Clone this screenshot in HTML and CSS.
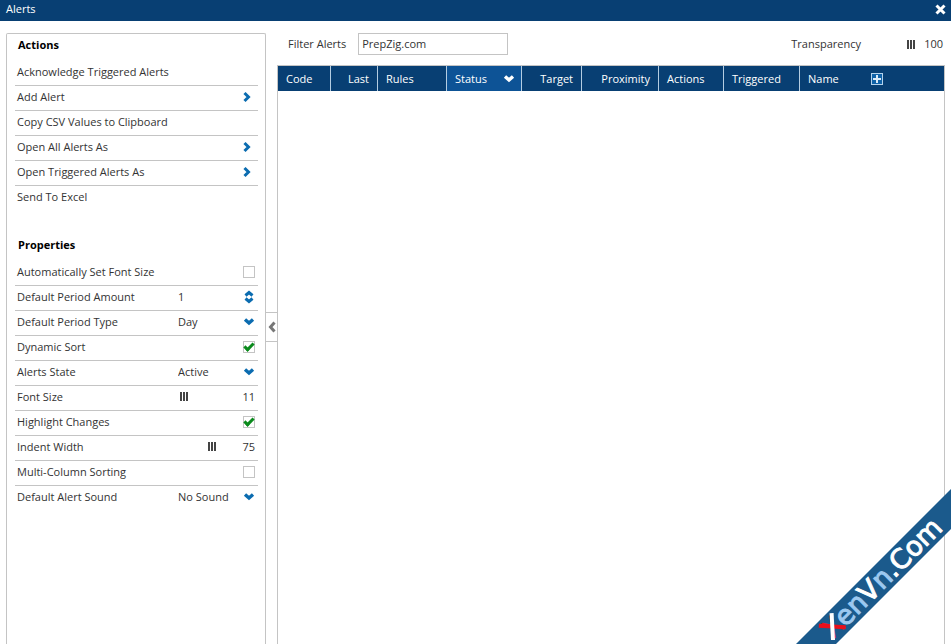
FILE: index.html
```
<!DOCTYPE html>
<html lang="en">
<head>
  <meta charset="UTF-8">
  <meta name="viewport" content="width=device-width, initial-scale=1">
  <title>Alerts</title>
  <link rel="stylesheet" href="styles.css">
</head>
<body>

  <!-- shared icons -->
  <svg class="sprite" aria-hidden="true">
    <symbol id="right" viewBox="0 0 12 12"><path d="M3.5 2L7.5 6L3.5 10" fill="none" stroke="currentColor" stroke-width="3"/></symbol>
    <symbol id="down" viewBox="0 0 12 12"><path d="M2 3.5L6 7L10 3.5" fill="none" stroke="currentColor" stroke-width="3.4"/></symbol>
    <symbol id="updown" viewBox="0 0 12 14"><path d="M2.5 5.5L6 2.5L9.5 5.5M2.5 8.5L6 11.5L9.5 8.5" fill="none" stroke="currentColor" stroke-width="3"/></symbol>
  </svg>

  <header class="titlebar">
    <h1>Alerts</h1>
    <button class="close" aria-label="Close">
      <svg width="11" height="11" viewBox="0 0 11 11"><path d="M1.5 1.5L9.5 9.5M9.5 1.5L1.5 9.5" stroke="#fff" stroke-width="3"/></svg>
    </button>
  </header>

  <div class="layout">
    <aside class="panel">
      <h2>Actions</h2>
      <ul class="rows">
        <li><button class="action">Acknowledge Triggered Alerts</button></li>
        <li><button class="action">Add Alert <svg class="icon"><use href="#right"/></svg></button></li>
        <li><button class="action">Copy CSV Values to Clipboard</button></li>
        <li><button class="action">Open All Alerts As <svg class="icon"><use href="#right"/></svg></button></li>
        <li><button class="action">Open Triggered Alerts As <svg class="icon"><use href="#right"/></svg></button></li>
        <li><button class="action">Send To Excel</button></li>
      </ul>

      <h2>Properties</h2>
      <ul class="rows">
        <li>
          <label for="autoFont">Automatically Set Font Size</label>
          <input type="checkbox" id="autoFont">
        </li>
        <li>
          <label for="periodAmount">Default Period Amount</label>
          <span class="field">
            <input type="text" id="periodAmount" value="1">
            <svg class="icon tall"><use href="#updown"/></svg>
          </span>
        </li>
        <li>
          <label for="periodType">Default Period Type</label>
          <span class="field">
            <select id="periodType"><option>Day</option></select>
            <svg class="icon"><use href="#down"/></svg>
          </span>
        </li>
        <li>
          <label for="dynamicSort">Dynamic Sort</label>
          <input type="checkbox" id="dynamicSort" checked>
        </li>
        <li>
          <label for="alertsState">Alerts State</label>
          <span class="field">
            <select id="alertsState"><option>Active</option></select>
            <svg class="icon"><use href="#down"/></svg>
          </span>
        </li>
        <li>
          <label for="fontSize">Font Size</label>
          <span class="slider">
            <input type="range" id="fontSize" min="10" max="30" value="11">
            <output for="fontSize">11</output>
          </span>
        </li>
        <li>
          <label for="highlight">Highlight Changes</label>
          <input type="checkbox" id="highlight" checked>
        </li>
        <li>
          <label for="indent">Indent Width</label>
          <span class="slider">
            <input type="range" id="indent" min="0" max="100" value="75">
            <output for="indent">75</output>
          </span>
        </li>
        <li>
          <label for="multiSort">Multi-Column Sorting</label>
          <input type="checkbox" id="multiSort">
        </li>
        <li>
          <label for="sound">Default Alert Sound</label>
          <span class="field">
            <select id="sound"><option>No Sound</option></select>
            <svg class="icon"><use href="#down"/></svg>
          </span>
        </li>
      </ul>
    </aside>

    <button class="collapse" aria-label="Hide panel">
      <svg width="9" height="12" viewBox="0 0 9 12"><path d="M6.5 1.5L2.5 6L6.5 10.5" fill="none" stroke="#777" stroke-width="3"/></svg>
    </button>

    <main class="content">
      <div class="toolbar">
        <label for="filter">Filter Alerts</label>
        <input type="text" id="filter" class="filter" value="PrepZig.com">
        <label for="transparency" class="push">Transparency</label>
        <span class="slider">
          <input type="range" id="transparency" min="0" max="100" value="100">
          <output for="transparency">100</output>
        </span>
      </div>

      <div class="grid">
        <table>
          <colgroup>
            <col class="c-code"><col class="c-last"><col class="c-rules"><col class="c-status"><col class="c-target">
            <col class="c-prox"><col class="c-actions"><col class="c-trig"><col>
          </colgroup>
          <thead>
            <tr>
              <th>Code</th>
              <th class="num">Last</th>
              <th>Rules</th>
              <th class="sorted"><span class="head">Status <svg class="icon"><use href="#down"/></svg></span></th>
              <th class="num">Target</th>
              <th class="num">Proximity</th>
              <th>Actions</th>
              <th>Triggered</th>
              <th>
                <span class="head name">Name
                  <button class="add" aria-label="Add column">
                    <svg width="12" height="12" viewBox="0 0 12 12"><rect x=".5" y=".5" width="11" height="11" fill="#0f62a8" stroke="#b4d2ec"/><path d="M6 2V10M2 6H10" stroke="#dceaf6" stroke-width="2"/></svg>
                  </button>
                </span>
              </th>
            </tr>
          </thead>
          <tbody></tbody>
        </table>
      </div>
    </main>
  </div>

  <svg class="ribbon" width="155" height="155" viewBox="0 0 155 155">
    <path d="M0 155L155 0V40L40 155Z" fill="#1b5a8c"/>
    <g transform="translate(37 151) rotate(-45)">
      <text x="0" y="0" class="brand"><tspan class="mark">X</tspan><tspan class="pale">en</tspan><tspan>V</tspan><tspan class="pale">n</tspan><tspan>.Com</tspan></text>
      <path d="M0 -20L18 0" stroke="#e8101c" stroke-width="4"/>
      <path d="M18 -20L0 0" stroke="#fff" stroke-width="4"/>
    </g>
  </svg>

</body>
</html>
```
FILE: styles.css
```
* {
  box-sizing: border-box;
}
body {
  margin: 0;
  min-height: 100vh;
  display: flex;
  flex-direction: column;
  position: relative;
  font: 11px/16px "Open Sans", sans-serif;
  color: #333;
  background: #fff;
}
button, input, select {
  font: inherit;
  color: inherit;
  margin: 0;
  padding: 0;
  border: 0;
  background: none;
  appearance: none;
}
button {
  cursor: pointer;
}
.sprite {
  display: none;
}
.icon {
  width: 12px;
  height: 12px;
  flex: none;
  color: #0b6cb0;
}
.icon.tall {
  height: 14px;
}

/* title bar */
.titlebar {
  display: flex;
  justify-content: space-between;
  align-items: center;
  height: 21px;
  padding: 0 5px 3px 6px;
  background: #083f73;
  color: #fff;
}
.titlebar h1 {
  margin: 0;
  font-size: 11px;
  font-weight: normal;
}
.close {
  display: flex;
}

.layout {
  flex: 1;
  display: flex;
  padding: 12px 6px 0;
}

/* left panel */
.panel {
  width: 260px;
  padding: 0 7px 0 8px;
  border: 1px solid #c4c4c4;
  border-bottom: 0;
  border-radius: 2px 2px 0 0;
}
.panel h2 {
  margin: 0 0 5px;
  padding-left: 3px;
  font-size: 11px;
  line-height: 22px;
  color: #000;
}
.rows {
  list-style: none;
  margin: 0 0 23px;
  padding: 0;
}
.rows li {
  display: flex;
  align-items: center;
  justify-content: space-between;
  height: 25px;
  padding: 0 3px 3px 2px;
  border-bottom: 1px solid #c4c4c4;
}
.rows li:last-child {
  border-bottom-color: transparent;
}
.action {
  flex: 1;
  display: flex;
  align-items: center;
  justify-content: space-between;
  padding-right: 2px;
  text-align: left;
}
.field {
  display: flex;
  align-items: center;
  width: 77px;
}
.field input, .field select {
  flex: 1;
  width: 60px;
}
input[type="checkbox"] {
  width: 12px;
  height: 12px;
  border: 1px solid #c4c4c4;
  position: relative;
}
input[type="checkbox"]:checked::after {
  content: "";
  box-sizing: border-box;
  position: absolute;
  left: 0;
  top: 1px;
  width: 10px;
  height: 6px;
  border: solid #0a8a1c;
  border-width: 0 0 3px 3px;
  transform: rotate(-45deg);
}

/* sliders */
.slider {
  display: flex;
  align-items: center;
  justify-content: space-between;
  width: 77px;
}
.slider input {
  width: 48px;
  height: 16px;
}
.slider input::-webkit-slider-thumb {
  appearance: none;
  width: 8px;
  height: 9px;
  background: repeating-linear-gradient(to right, #444 0 2px, transparent 2px 3px);
}

/* collapse handle */
.collapse {
  width: 12px;
  height: 30px;
  margin-top: 279px;
  display: flex;
  align-items: center;
  justify-content: center;
  border: 1px solid #c4c4c4;
  border-width: 1px 0;
}

/* right side */
.content {
  flex: 1;
  min-width: 0;
  display: flex;
  flex-direction: column;
  margin-left: -1px;
}
.toolbar {
  display: flex;
  align-items: center;
  height: 22px;
  margin-bottom: 10px;
  padding: 0 2px 0 11px;
}
.filter {
  width: 150px;
  height: 22px;
  margin-left: 12px;
  padding: 0 3px 2px;
  border: 1px solid #c4c4c4;
}
.push {
  margin-left: auto;
}
.toolbar .slider {
  width: 82px;
}
.toolbar .slider input {
  width: 54px;
}
.grid {
  flex: 1;
  border: 1px solid #c4c4c4;
  border-bottom: 0;
}
table {
  width: 100%;
  table-layout: fixed;
  border-collapse: separate;
  border-spacing: 0;
}
th {
  height: 25px;
  padding: 0 8px;
  font-weight: normal;
  text-align: left;
  color: #fff;
  background: #083f73;
  border-right: 1px solid #b4cde2;
}
th:last-child {
  border-right: 0;
}
th.num {
  text-align: right;
}
th.sorted {
  background: #0d5396;
  padding-right: 6px;
}
.head {
  display: flex;
  align-items: center;
  justify-content: space-between;
}
.head .icon {
  color: #fff;
}
.head.name {
  justify-content: flex-start;
  gap: 32px;
}
.add {
  display: flex;
}
.c-code { width: 53px; }
.c-last { width: 47px; }
.c-rules { width: 69px; }
.c-status { width: 75px; }
.c-target { width: 60px; }
.c-prox { width: 77px; }
.c-actions { width: 65px; }
.c-trig { width: 76px; }

/* corner ribbon */
.ribbon {
  position: absolute;
  right: 0;
  bottom: 0;
  pointer-events: none;
}
.brand {
  font: 27px "DejaVu Sans", sans-serif;
  fill: #fff;
  stroke: #fff;
}
.mark {
  fill: #e8101c;
  stroke: none;
}
.pale {
  fill: #9cc8f0;
  stroke: #9cc8f0;
}
```
